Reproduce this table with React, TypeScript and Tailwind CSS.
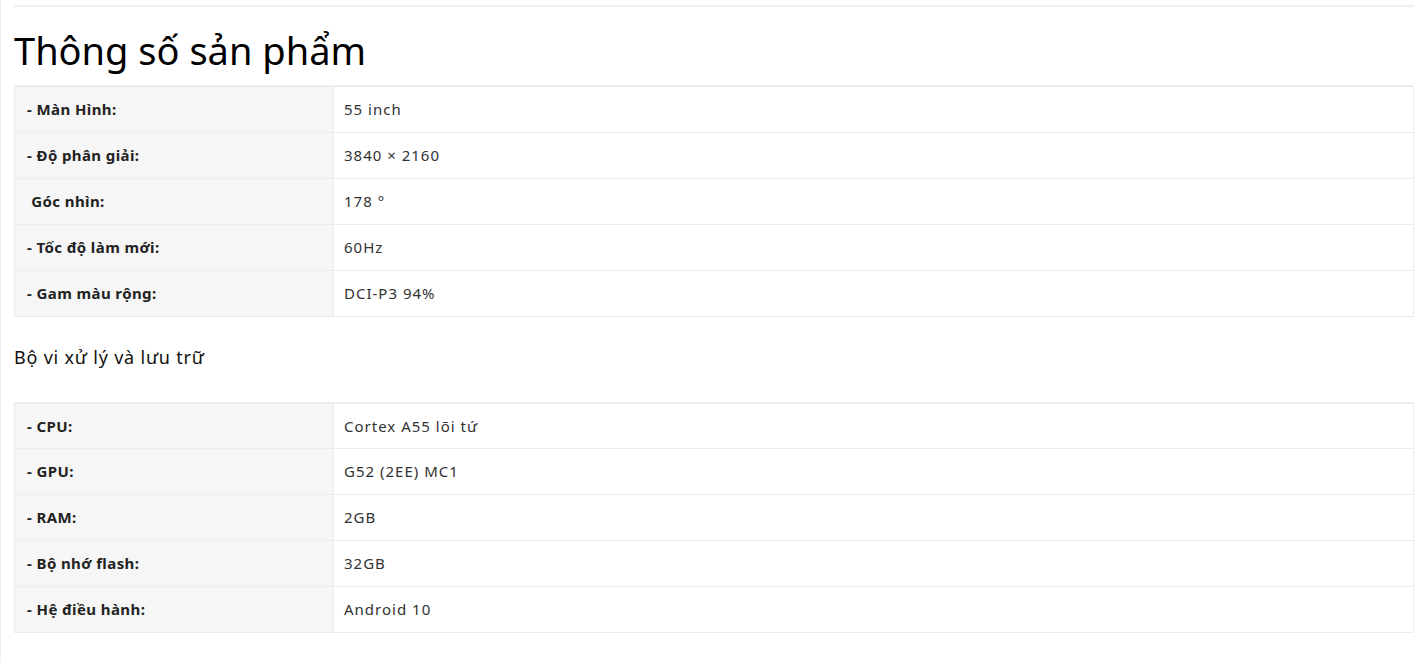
const screen = [
  ["- Màn Hình:", "55 inch"],
  ["- Độ phân giải:", "3840 × 2160"],
  [" Góc nhìn:", "178 °"],
  ["- Tốc độ làm mới:", "60Hz"],
  ["- Gam màu rộng:", "DCI-P3 94%"],
];

const cpu = [
  ["- CPU:", "Cortex A55 lõi tứ"],
  ["- GPU:", "G52 (2EE) MC1"],
  ["- RAM:", "2GB"],
  ["- Bộ nhớ flash:", "32GB"],
  ["- Hệ điều hành:", "Android 10"],
];

const SpecTable = ({ rows }: { rows: string[][] }) => (
  <table className="w-full border-collapse border-t-2 border-[#ececec] text-[15px]">
    <tbody>
      {rows.map(([k, v]) => (
        <tr key={k} className="h-[46px] border-b border-[#ececec]">
          <td className="w-[319px] bg-[#f6f6f6] border-x border-[#ececec] pl-3 align-middle font-bold text-[#222] tracking-[0.4px] whitespace-pre">
            {k}
          </td>
          <td className="pl-[10px] align-middle text-[#333] tracking-[1px] border-r border-[#ececec]">{v}</td>
        </tr>
      ))}
    </tbody>
  </table>
);

export default function App() {
  return (
    <div className="w-[1424px] h-[663px] bg-white font-['Noto_Sans',sans-serif] border-l border-[#f0f0f0] overflow-hidden">
      <div className="pl-[13px] pr-[10px] pt-[5px]">
        <div className="border-t-2 border-[#f0f0f0]" />
        <h1 className="text-[38px] leading-none text-black mt-[24px] mb-[16px]">Thông số sản phẩm</h1>
        <SpecTable rows={screen} />
        <p className="text-[18px] text-[#111] tracking-[0.8px] mt-[27px] mb-[31px]">Bộ vi xử lý và lưu trữ</p>
        <SpecTable rows={cpu} />
      </div>
    </div>
  );
}
